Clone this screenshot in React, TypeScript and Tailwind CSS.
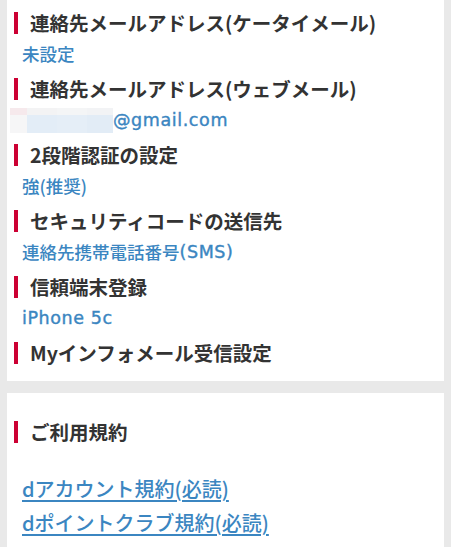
import React from 'react';

type Item = { title: string; value?: React.ReactNode };

const jp = { fontFamily: '"Noto Sans CJK JP", "Noto Sans", sans-serif' };

// Latin runs: the reference's font sets these wider than Noto's Latin
const L: React.FC<{ children: React.ReactNode }> = ({ children }) => (
  <span className="font-['DejaVu_Sans'] font-normal tracking-[0.6px] [-webkit-text-stroke:0.4px_currentColor]">
    {children}
  </span>
);

const BlurredName: React.FC = () => (
  <span className="inline-grid grid-cols-[17px_30px_30px_26px] grid-rows-[7px_18px] align-middle">
    <span className="bg-[#f6e9ec]" />
    <span className="bg-[#f3f3f4]" />
    <span className="bg-[#f4f5f6]" />
    <span className="bg-[#f2f3f5]" />
    <span className="bg-[#f6f6f7]" />
    <span className="bg-[#e3edf7]" />
    <span className="bg-[#e5eef7]" />
    <span className="bg-[#e2ecf6]" />
  </span>
);

const items: Item[] = [
  { title: '連絡先メールアドレス(ケータイメール)', value: '未設定' },
  {
    title: '連絡先メールアドレス(ウェブメール)',
    value: (
      <span className="flex items-center -ml-[12px]">
        <BlurredName />
        <L>@gmail.com</L>
      </span>
    ),
  },
  { title: '2段階認証の設定', value: '強(推奨)' },
  {
    title: 'セキュリティコードの送信先',
    value: (
      <>
        連絡先携帯電話番号<L>(SMS)</L>
      </>
    ),
  },
  { title: '信頼端末登録', value: <L>iPhone 5c</L> },
  { title: 'Myインフォメール受信設定' },
];

const Heading: React.FC<{ children: React.ReactNode }> = ({ children }) => (
  <div className="flex h-[22px] items-center">
    <span className="block h-[22px] w-[4px] bg-[#cc0033]" />
    <span className="ml-[12px] text-[19.5px] font-bold leading-none text-[#333333] whitespace-nowrap">{children}</span>
  </div>
);

export default function App() {
  return (
    <div className="min-h-[547px] w-[451px] overflow-hidden bg-[#e9e9e9] px-[7px]" style={jp}>
      <div className="flex flex-col gap-[12px] bg-white px-[7px] pt-[12px] pb-[17px]">
        {items.map((item) => (
          <div key={item.title} className="flex flex-col">
            <Heading>{item.title}</Heading>
            {item.value && (
              <div className="mt-[8px] flex h-[24px] items-center pl-[8px] text-[17.5px] font-medium text-[#3b86c1] whitespace-nowrap">
                {item.value}
              </div>
            )}
          </div>
        ))}
      </div>
      <div className="mt-[12px] bg-white px-[7px] pt-[28px] pb-[30px]">
        <Heading>ご利用規約</Heading>
        <div className="mt-[33px] flex flex-col gap-[8px] pl-[8px]">
          <a href="#" className="h-[26px] text-[20px] font-medium leading-[26px] text-[#3b86c1] underline underline-offset-[3px] whitespace-nowrap">
            dアカウント規約(必読)
          </a>
          <a href="#" className="h-[26px] text-[20px] font-medium leading-[26px] text-[#3b86c1] underline underline-offset-[3px] whitespace-nowrap">
            dポイントクラブ規約(必読)
          </a>
        </div>
      </div>
    </div>
  );
}
